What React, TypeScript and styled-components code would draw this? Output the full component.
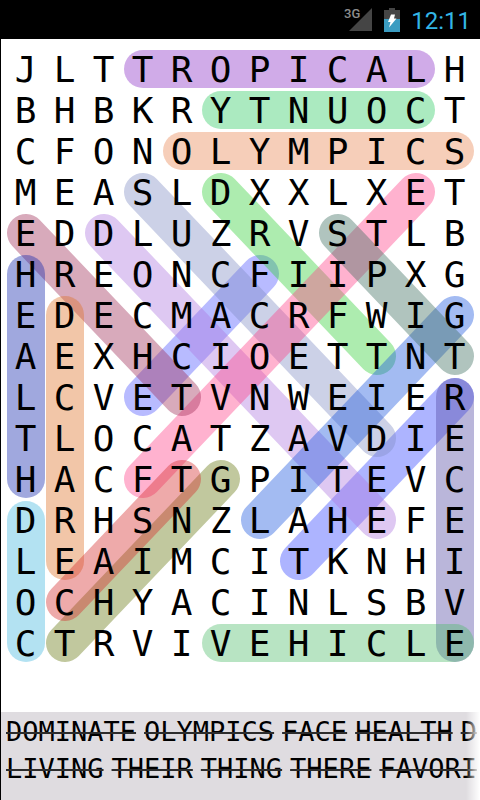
import React from "react";
import styled, { createGlobalStyle } from "styled-components";

const GlobalStyle = createGlobalStyle`
  * { box-sizing: border-box; }
  body { margin: 0; background: #fff; }
`;

const Screen = styled.div`
  min-height: 100vh;
  display: flex;
  flex-direction: column;
  overflow: hidden;
  background: #fff;
`;

const StatusBar = styled.header`
  display: flex;
  align-items: center;
  justify-content: flex-end;
  gap: 11px;
  height: 39px;
  padding-right: 9px;
  background: #000;
`;

const StatusIcon = styled.svg`
  display: block;
  flex: none;
`;

const Clock = styled.time`
  padding-top: 3px;
  font: 400 24px/36px Roboto, sans-serif;
  color: #33b5e5;
`;

const Game = styled.main`
  flex: 1;
  display: flex;
  flex-direction: column;
  justify-content: space-between;
  border-left: 1px solid #000;
`;

const BoardArea = styled.section`
  padding: 10px 6px 40px 5px;
`;

const Board = styled.div`
  position: relative;
  width: 100%;
  aspect-ratio: 468 / 615;
`;

const Highlights = styled.svg`
  position: absolute;
  inset: 0;
  width: 100%;
  height: 100%;
`;

const Letters = styled.div`
  position: relative;
  height: 100%;
  display: grid;
  grid-template-columns: repeat(12, 1fr);
  grid-template-rows: repeat(15, 1fr);
`;

const Letter = styled.span`
  display: flex;
  align-items: center;
  justify-content: center;
  font: 36px/41px "DejaVu Sans Mono", monospace;
  color: #000;
`;

const WordPanel = styled.section`
  position: relative;
  height: 88px;
  padding: 1px 0 0 5px;
  overflow: hidden;
  background: #dfdce0;

  &::after {
    content: "";
    position: absolute;
    top: 0;
    right: 0;
    bottom: 0;
    width: 14px;
    background: linear-gradient(to right, rgba(255, 255, 255, 0), #fff);
  }
`;

const WordRow = styled.ul`
  display: flex;
  gap: 8px;
  margin: 0;
  padding: 0;
  list-style: none;
`;

const FoundWord = styled.s`
  display: block;
  font: 27px/37px "DejaVu Sans Mono", monospace;
  color: #000;
  text-decoration: line-through 2px #2c2c2c;
`;

const rows = [
  "JLTTROPICALH",
  "BHBKRYTNUOCT",
  "CFONOLYMPICS",
  "MEASLDXXLXET",
  "EDDLUZRVSTLB",
  "HREONCFIIPXG",
  "EDECMACRFWIG",
  "AEXHCIOETTNT",
  "LCVETVNWEIER",
  "TLOCATZAVDIE",
  "HACFTGPITEVC",
  "DRHSNZLAHEFE",
  "LEAIMCITKNHI",
  "OCHYACINLSBV",
  "CTRVIVEHICLE",
];

type Mark = { from: [number, number]; to: [number, number]; tint: [number, number, number] };

// Each mark runs between two cells (column, row); tint is its colour over white.
const marks: Mark[] = [
  { from: [3, 0], to: [10, 0], tint: [208, 171, 232] },
  { from: [5, 1], to: [10, 1], tint: [171, 234, 192] },
  { from: [4, 2], to: [11, 2], tint: [246, 206, 185] },
  { from: [6, 5], to: [3, 8], tint: [184, 187, 255] },
  { from: [11, 8], to: [7, 12], tint: [173, 180, 255] },
  { from: [3, 3], to: [9, 9], tint: [204, 209, 231] },
  { from: [5, 3], to: [9, 7], tint: [173, 236, 175] },
  { from: [2, 4], to: [9, 11], tint: [222, 200, 242] },
  { from: [10, 3], to: [3, 10], tint: [255, 178, 207] },
  { from: [0, 4], to: [4, 8], tint: [216, 170, 187] },
  { from: [11, 6], to: [6, 11], tint: [163, 187, 242] },
  { from: [8, 4], to: [11, 7], tint: [176, 196, 190] },
  { from: [0, 5], to: [0, 10], tint: [160, 168, 222] },
  { from: [1, 6], to: [1, 12], tint: [242, 198, 168] },
  { from: [11, 8], to: [11, 14], tint: [186, 182, 218] },
  { from: [5, 10], to: [1, 14], tint: [193, 200, 158] },
  { from: [4, 10], to: [1, 13], tint: [238, 170, 170] },
  { from: [0, 11], to: [0, 14], tint: [179, 226, 242] },
  { from: [5, 14], to: [11, 14], tint: [184, 228, 195] },
];

const OPACITY = 0.4;
const inkOf = (tint: number[]) =>
  `rgb(${tint.map((c) => Math.max(0, Math.round(255 - (255 - c) / OPACITY))).join(",")})`;
const cx = (col: number) => col * 39 + 20;
const cy = (row: number) => row * 41 + 20;

const foundWords = [
  ["DOMINATE", "OLYMPICS", "FACE", "HEALTH", "D"],
  ["LIVING", "THEIR", "THING", "THERE", "FAVORI"],
];

const SignalIcon = () => (
  <StatusIcon width="30" height="26" viewBox="0 0 30 26" role="img" aria-label="3G signal">
    <path d="M29 1V24H6Z" fill="#454545" />
    <text x="1" y="11" fontFamily="Roboto, sans-serif" fontSize="13" fontWeight="500" fill="#8c8c8c">
      3G
    </text>
  </StatusIcon>
);

const BatteryIcon = () => (
  <StatusIcon width="16" height="26" viewBox="0 0 16 26" role="img" aria-label="Battery charging">
    <path d="M5 1H11V3H16V12H0V3H5Z" fill="#454545" />
    <path d="M0 12H16V25H0Z" fill="#3b9cc1" />
    <path d="M7 7.5H11L10 11.5H12.5L5 20.5L6.5 15H4Z" fill="#fff" />
  </StatusIcon>
);

export default function App() {
  return (
    <Screen>
      <GlobalStyle />
      <StatusBar>
        <SignalIcon />
        <BatteryIcon />
        <Clock>12:11</Clock>
      </StatusBar>
      <Game>
        <BoardArea>
          <Board>
            <Highlights viewBox="0 0 468 615" aria-hidden="true">
              {marks.map(({ from, to, tint }, i) => (
                <line
                  key={i}
                  x1={cx(from[0])}
                  y1={cy(from[1])}
                  x2={cx(to[0])}
                  y2={cy(to[1])}
                  stroke={inkOf(tint)}
                  strokeOpacity={OPACITY}
                  strokeWidth={38}
                  strokeLinecap="round"
                />
              ))}
            </Highlights>
            <Letters>
              {rows.flatMap((row, r) =>
                row.split("").map((ch, c) => <Letter key={`${r}-${c}`}>{ch}</Letter>)
              )}
            </Letters>
          </Board>
        </BoardArea>
        <WordPanel>
          {foundWords.map((words, i) => (
            <WordRow key={i}>
              {words.map((word) => (
                <li key={word}>
                  <FoundWord>{word}</FoundWord>
                </li>
              ))}
            </WordRow>
          ))}
        </WordPanel>
      </Game>
    </Screen>
  );
}
